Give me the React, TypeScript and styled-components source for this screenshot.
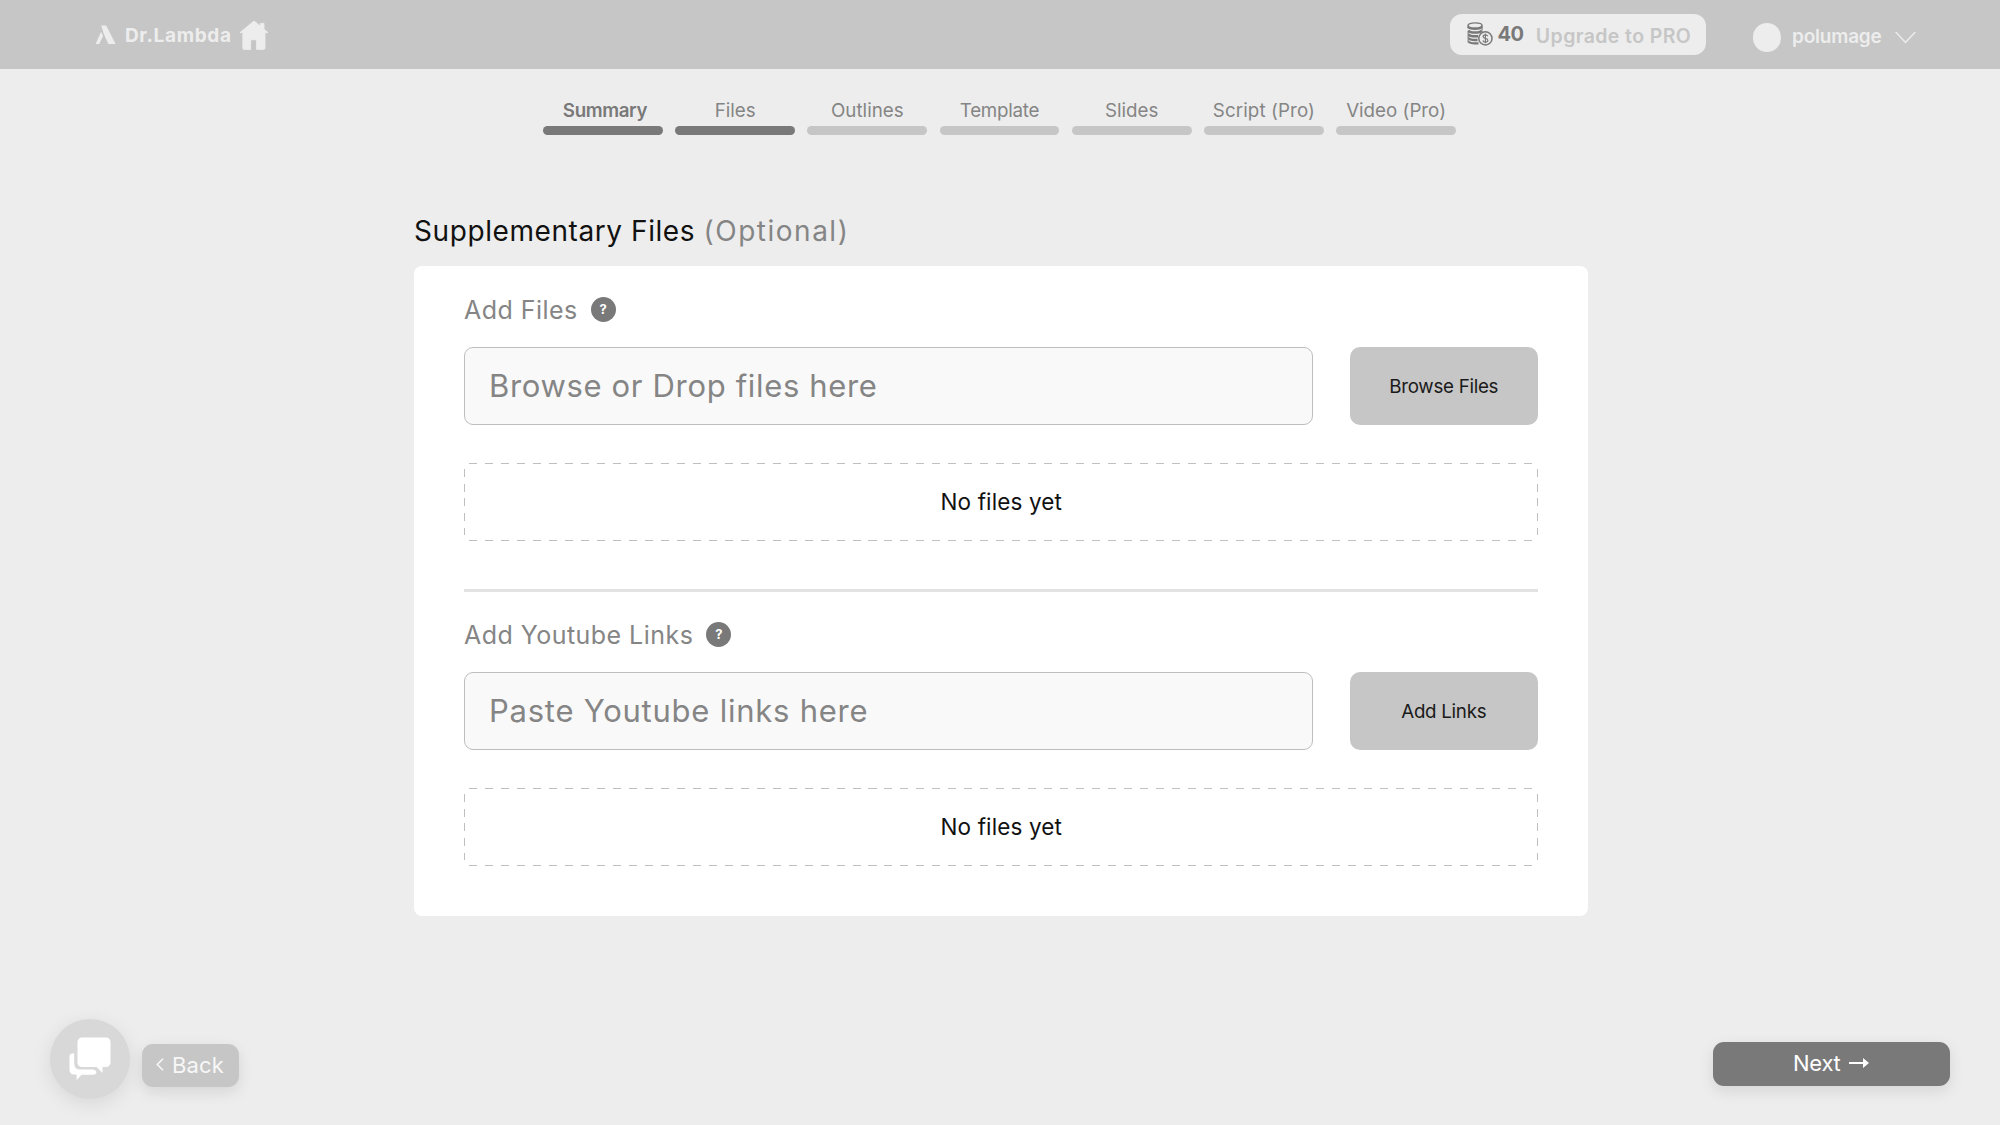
import React from "react";
import styled, { createGlobalStyle } from "styled-components";

const inter = `Inter, "Noto Sans", sans-serif`;

const GlobalStyle = createGlobalStyle`
  * { box-sizing: border-box; }
  body { margin: 0; background: #ededed; font-family: ${inter}; color: #111; }
  button, input { font: inherit; border: 0; padding: 0; margin: 0; }
  svg { display: block; flex: none; }
`;

const Page = styled.div`
  display: flex;
  flex-direction: column;
  height: 1125px;
  background: #ededed;
  overflow: hidden;
`;

const Header = styled.header`
  display: flex;
  align-items: flex-start;
  justify-content: space-between;
  height: 69px;
  flex: none;
  padding: 0 84px 0 95px;
  background: #c6c6c6;
  color: #ededed;
`;

const Brand = styled.div`
  display: flex;
  align-items: center;
  height: 70px;
`;

const BrandName = styled.span`
  margin: 1px 7.5px 0 9px;
  font-size: 19px;
  font-weight: 700;
  letter-spacing: 0.65px;
  line-height: 24px;
`;

const Account = styled.div`
  display: flex;
  align-items: flex-start;
  padding-top: 14px;
`;

const UpgradePill = styled.button`
  display: flex;
  align-items: center;
  width: 256px;
  height: 40.5px;
  margin-right: 47px;
  padding-left: 17px;
  border-radius: 12px;
  background: #ededed;
  white-space: nowrap;
`;

const Credits = styled.span`
  margin: 0 0 0 5px;
  font-size: 20px;
  font-weight: 700;
  line-height: 24px;
  letter-spacing: -0.6px;
  color: #797979;
`;

const UpgradeText = styled.span`
  margin: 3px 0 0 12.5px;
  font-size: 19.5px;
  font-weight: 600;
  line-height: 24px;
  letter-spacing: 0.4px;
  color: #c6c6c6;
`;

const Avatar = styled.span`
  width: 28.5px;
  height: 28.5px;
  margin-top: 9px;
  border-radius: 50%;
  background: #ededed;
`;

const UserName = styled.span`
  width: 91px;
  margin: 9.5px 12px 0 11px;
  font-size: 19px;
  font-weight: 600;
  line-height: 26px;
  letter-spacing: -0.2px;
`;

const CaretSlot = styled.span`
  margin-top: 17px;
`;

const Steps = styled.nav`
  display: flex;
  gap: 12.5px;
  justify-content: center;
  height: 65.5px;
  flex: none;
  padding-right: 1px;
`;

const Step = styled.div<{ $done?: boolean; $current?: boolean }>`
  display: flex;
  flex-direction: column;
  justify-content: flex-end;
  width: 119.7px;
  gap: 4px;
  text-align: center;
  font-size: 18.75px;
  line-height: 22px;
  letter-spacing: ${(p) => (p.$current ? "-0.4px" : "0")};
  font-weight: ${(p) => (p.$current ? 600 : 400)};
  color: ${(p) => (p.$current ? "#797979" : "#858585")};
  white-space: nowrap;

  &::after {
    content: "";
    height: 8.3px;
    border-radius: 5px;
    background: ${(p) => (p.$done ? "#797979" : "#c6c6c6")};
  }
`;

const StepLabel = styled.span<{ $shift?: number; $track?: number }>`
  padding-left: ${(p) => Math.max(0, p.$shift ?? 0) * 2}px;
  padding-right: ${(p) => Math.max(0, -(p.$shift ?? 0)) * 2}px;
  ${(p) => (p.$track ? `letter-spacing: ${p.$track}px;` : "")}
`;

const Main = styled.main`
  width: 1173.5px;
  margin: 76.5px 0 0 414px;
  flex: 1;
`;

const Title = styled.h1`
  margin: 0 0 15px;
  font-size: 28px;
  font-weight: 400;
  line-height: 40px;
  height: 40px;
  letter-spacing: 0.58px;
`;

const Optional = styled.span`
  color: #858585;
  letter-spacing: 1.5px;
`;

const Card = styled.section`
  display: flex;
  flex-direction: column;
  height: 649.5px;
  padding: 0 50px;
  border-radius: 8px;
  background: #fff;
`;

const Block = styled.div`
  padding-top: 28px;
`;

const Label = styled.div`
  display: flex;
  align-items: center;
  gap: 13px;
  height: 32px;
  margin-bottom: 21px;
  font-size: 25px;
  letter-spacing: 0.46px;
  color: #858585;
`;

const Help = styled.span`
  display: grid;
  place-items: center;
  width: 25px;
  height: 25px;
  margin-bottom: 1px;
  padding-bottom: 1px;
  border-radius: 50%;
  background: #797979;
  color: #fff;
  font-size: 13px;
  font-weight: 700;
  line-height: 16px;
  letter-spacing: 0;
`;

const Entry = styled.div`
  display: flex;
  gap: 37.5px;
  height: 78px;
`;

const Field = styled.input<{ $track: number }>`
  flex: 1;
  min-width: 0;
  padding: 0 24px 2px;
  border: 1px solid #bebebe;
  border-radius: 9px;
  background: #f9f9f9;
  font-size: 31px;
  letter-spacing: ${(p) => p.$track}px;
  outline: none;

  &::placeholder {
    color: #858585;
    opacity: 1;
  }
`;

const Action = styled.button`
  width: 187.5px;
  border-radius: 10px;
  background: #c6c6c6;
  color: #1a1a1a;
  font-size: 18.75px;
  letter-spacing: -0.28px;
`;

const across = "repeating-linear-gradient(90deg, #bfbfbf 0 8px, transparent 8px 15.98px)";
const down = "repeating-linear-gradient(180deg, #bfbfbf 0 8px, transparent 8px 14.7px)";

const Empty = styled.div`
  display: flex;
  align-items: center;
  justify-content: center;
  height: 78px;
  margin-top: 37.5px;
  padding-left: 1px;
  font-size: 22.5px;
  letter-spacing: 0.12px;
  color: #111;
  background:
    ${across} 5px 0 / calc(100% - 11px) 1px no-repeat,
    ${across} 5px 100% / calc(100% - 11px) 1px no-repeat,
    ${down} 0 6px / 1px calc(100% - 12px) no-repeat,
    ${down} 100% 6px / 1px calc(100% - 12px) no-repeat;
`;

const Divider = styled.hr`
  width: 100%;
  height: 3px;
  flex: none;
  margin: 48px 0 -0.5px;
  border: 0;
  background: #e2e2e2;
`;

const Footer = styled.footer`
  display: flex;
  align-items: flex-start;
  height: 106.5px;
  flex: none;
  padding: 0 50px;
`;

const ChatButton = styled.button`
  display: grid;
  place-items: center;
  width: 80px;
  height: 80px;
  margin-right: 12px;
  border-radius: 50%;
  background: #d8d8d8;
  box-shadow: 0 5px 20px rgba(0, 0, 0, 0.09);
`;

const NavButton = styled.button<{ $primary?: boolean }>`
  display: flex;
  align-items: center;
  justify-content: center;
  gap: 8px;
  width: ${(p) => (p.$primary ? "237.5px" : "97px")};
  height: 43.5px;
  margin: ${(p) => (p.$primary ? "23.5px 0 0 auto" : "25.3px 0 0")};
  padding: ${(p) => (p.$primary ? "0 1px 1px 0" : "0 1px 2px 0")};
  border-radius: 11px;
  background: ${(p) => (p.$primary ? "#797979" : "#c6c6c6")};
  color: ${(p) => (p.$primary ? "#fff" : "#f7f7f7")};
  box-shadow: 0 5px 15px rgba(0, 0, 0, 0.1);
  font-size: 22px;
  letter-spacing: ${(p) => (p.$primary ? "-0.25px" : "0.1px")};
`;

const Lambda = () => (
  <svg width="21" height="20" viewBox="0 0 21 20" fill="#ededed">
    <path d="M6.2 0.5h5L20.6 19h-7.2L8.6 8.6 7.7 5.2z" />
    <path d="M6.1 6.8 8.1 11 4.2 19H0.6z" />
  </svg>
);

const House = () => (
  <svg width="30" height="30" viewBox="0 0 30 30" fill="#ededed">
    <path
      d="M15 1 1 12.6h2.8V28q0 1.4 1.4 1.4h6.4V21q0-1.3 1.3-1.3h3.4q1.3 0 1.3 1.3v8.4h7q1.4 0 1.4-1.4V12.6H29l-4-3.4V3.4h-3.7v2.7z"
      stroke="#ededed"
      strokeWidth="0.8"
      strokeLinejoin="round"
    />
  </svg>
);

const Coins = () => (
  <svg width="26" height="24" viewBox="0 0 26 24" fill="none" stroke="#797979">
    <ellipse cx="8" cy="3.4" rx="7" ry="2.5" strokeWidth="1.4" />
    <path d="M1 4.6C1.6 6.200 4.600 7 8 7s6.400-.8 7-2.400" strokeWidth="1.8" />
    <path d="M1.200 8.400C2.300 9.900 5 10.500 8 10.500s5.700-.6 6.800-2.100" strokeWidth="2.500" />
    <path d="M1.200 12.200C2.300 13.700 5 14.300 8 14.300h3" strokeWidth="2.500" />
    <path d="M1.200 16C2.300 17.400 5 18 8 18h2.500" strokeWidth="2.500" />
    <path d="M1.200 19.400C2.300 20.800 5 21.400 8 21.400h3.500" strokeWidth="2.200" />
    <path d="M1.100 3.500v3M15 3.500v5M1.100 10v2.500M1.100 14v2M1.100 17.500v2" strokeWidth="1.100" />
    <circle cx="18.400" cy="16.400" r="6.600" fill="#ededed" strokeWidth="1.500" />
    <path
      d="M20.800 14.200c-.4-1-1.300-1.400-2.400-1.400-1.400 0-2.300.7-2.300 1.700 0 2.500 4.800 1.200 4.800 3.800 0 1.100-1 1.800-2.500 1.800-1.300 0-2.300-.6-2.600-1.600M18.400 11.600v9.700"
      strokeWidth="1.200"
    />
  </svg>
);

const Caret = () => (
  <svg width="21" height="13" viewBox="0 0 21 13" fill="none" stroke="#ededed" strokeWidth="1.5">
    <path d="M0.7 1 10.5 11.4 20.3 1" />
  </svg>
);

const ChatIcon = () => (
  <svg width="42" height="43" viewBox="0 0 42 43" fill="#fff">
    <path d="M13 0.5h24a4.5 4.5 0 0 1 4.5 4.5v20.5a4.5 4.5 0 0 1-4.5 4.5h-3.5v6L27.5 30H13a4.5 4.5 0 0 1-4.5-4.5V5A4.5 4.5 0 0 1 13 0.5z" />
    <path d="M0.500 18.800q0-2.600 4.700-2.600v10.600q0 5.800 5.800 5.800h12.500q3.300 0 4 2.600-.5 2.600-3.300 2.600H12.600L7.600 43v-5.500H4.700A4.200 4.200 0 0 1 0.500 33.300z" />
  </svg>
);

const BackChevron = () => (
  <svg width="8" height="13" viewBox="0 0 8 13" fill="none" stroke="#f7f7f7" strokeWidth="1.6">
    <path d="M7 0.7 1.3 6.5 7 12.3" />
  </svg>
);

const NextArrow = () => (
  <svg width="20" height="12" viewBox="0 0 20 12" fill="#fff">
    <path d="M0 5h14V0.9L20 6l-6 5.1V7H0z" />
  </svg>
);

const steps = [
  { label: "Summary", done: true, current: true, shift: 2 },
  { label: "Files", done: true },
  { label: "Outlines" },
  { label: "Template", track: -0.25 },
  { label: "Slides" },
  { label: "Script (Pro)", track: 0.1 },
  { label: "Video (Pro)" },
];

const sources = [
  { label: "Add Files", hint: "Browse or Drop files here", action: "Browse Files", track: 0.66 },
  { label: "Add Youtube Links", hint: "Paste Youtube links here", action: "Add Links", track: 0.76 },
];

export default function App() {
  return (
    <Page>
      <GlobalStyle />
      <Header>
        <Brand>
          <Lambda />
          <BrandName>Dr.Lambda</BrandName>
          <House />
        </Brand>
        <Account>
          <UpgradePill>
            <Coins />
            <Credits>40</Credits>
            <UpgradeText>Upgrade to PRO</UpgradeText>
          </UpgradePill>
          <Avatar />
          <UserName>polumage</UserName>
          <CaretSlot>
            <Caret />
          </CaretSlot>
        </Account>
      </Header>
      <Steps>
        {steps.map((s) => (
          <Step key={s.label} $done={s.done} $current={s.current}>
            <StepLabel $shift={s.shift} $track={s.track}>
              {s.label}
            </StepLabel>
          </Step>
        ))}
      </Steps>
      <Main>
        <Title>
          Supplementary Files <Optional>(Optional)</Optional>
        </Title>
        <Card>
          {sources.map((s, i) => (
            <React.Fragment key={s.label}>
              {i > 0 && <Divider />}
              <Block>
                <Label>
                  {s.label}
                  <Help>?</Help>
                </Label>
                <Entry>
                  <Field placeholder={s.hint} $track={s.track} />
                  <Action>{s.action}</Action>
                </Entry>
                <Empty>No files yet</Empty>
              </Block>
            </React.Fragment>
          ))}
        </Card>
      </Main>
      <Footer>
        <ChatButton>
          <ChatIcon />
        </ChatButton>
        <NavButton>
          <BackChevron />
          Back
        </NavButton>
        <NavButton $primary>
          Next
          <NextArrow />
        </NavButton>
      </Footer>
    </Page>
  );
}
